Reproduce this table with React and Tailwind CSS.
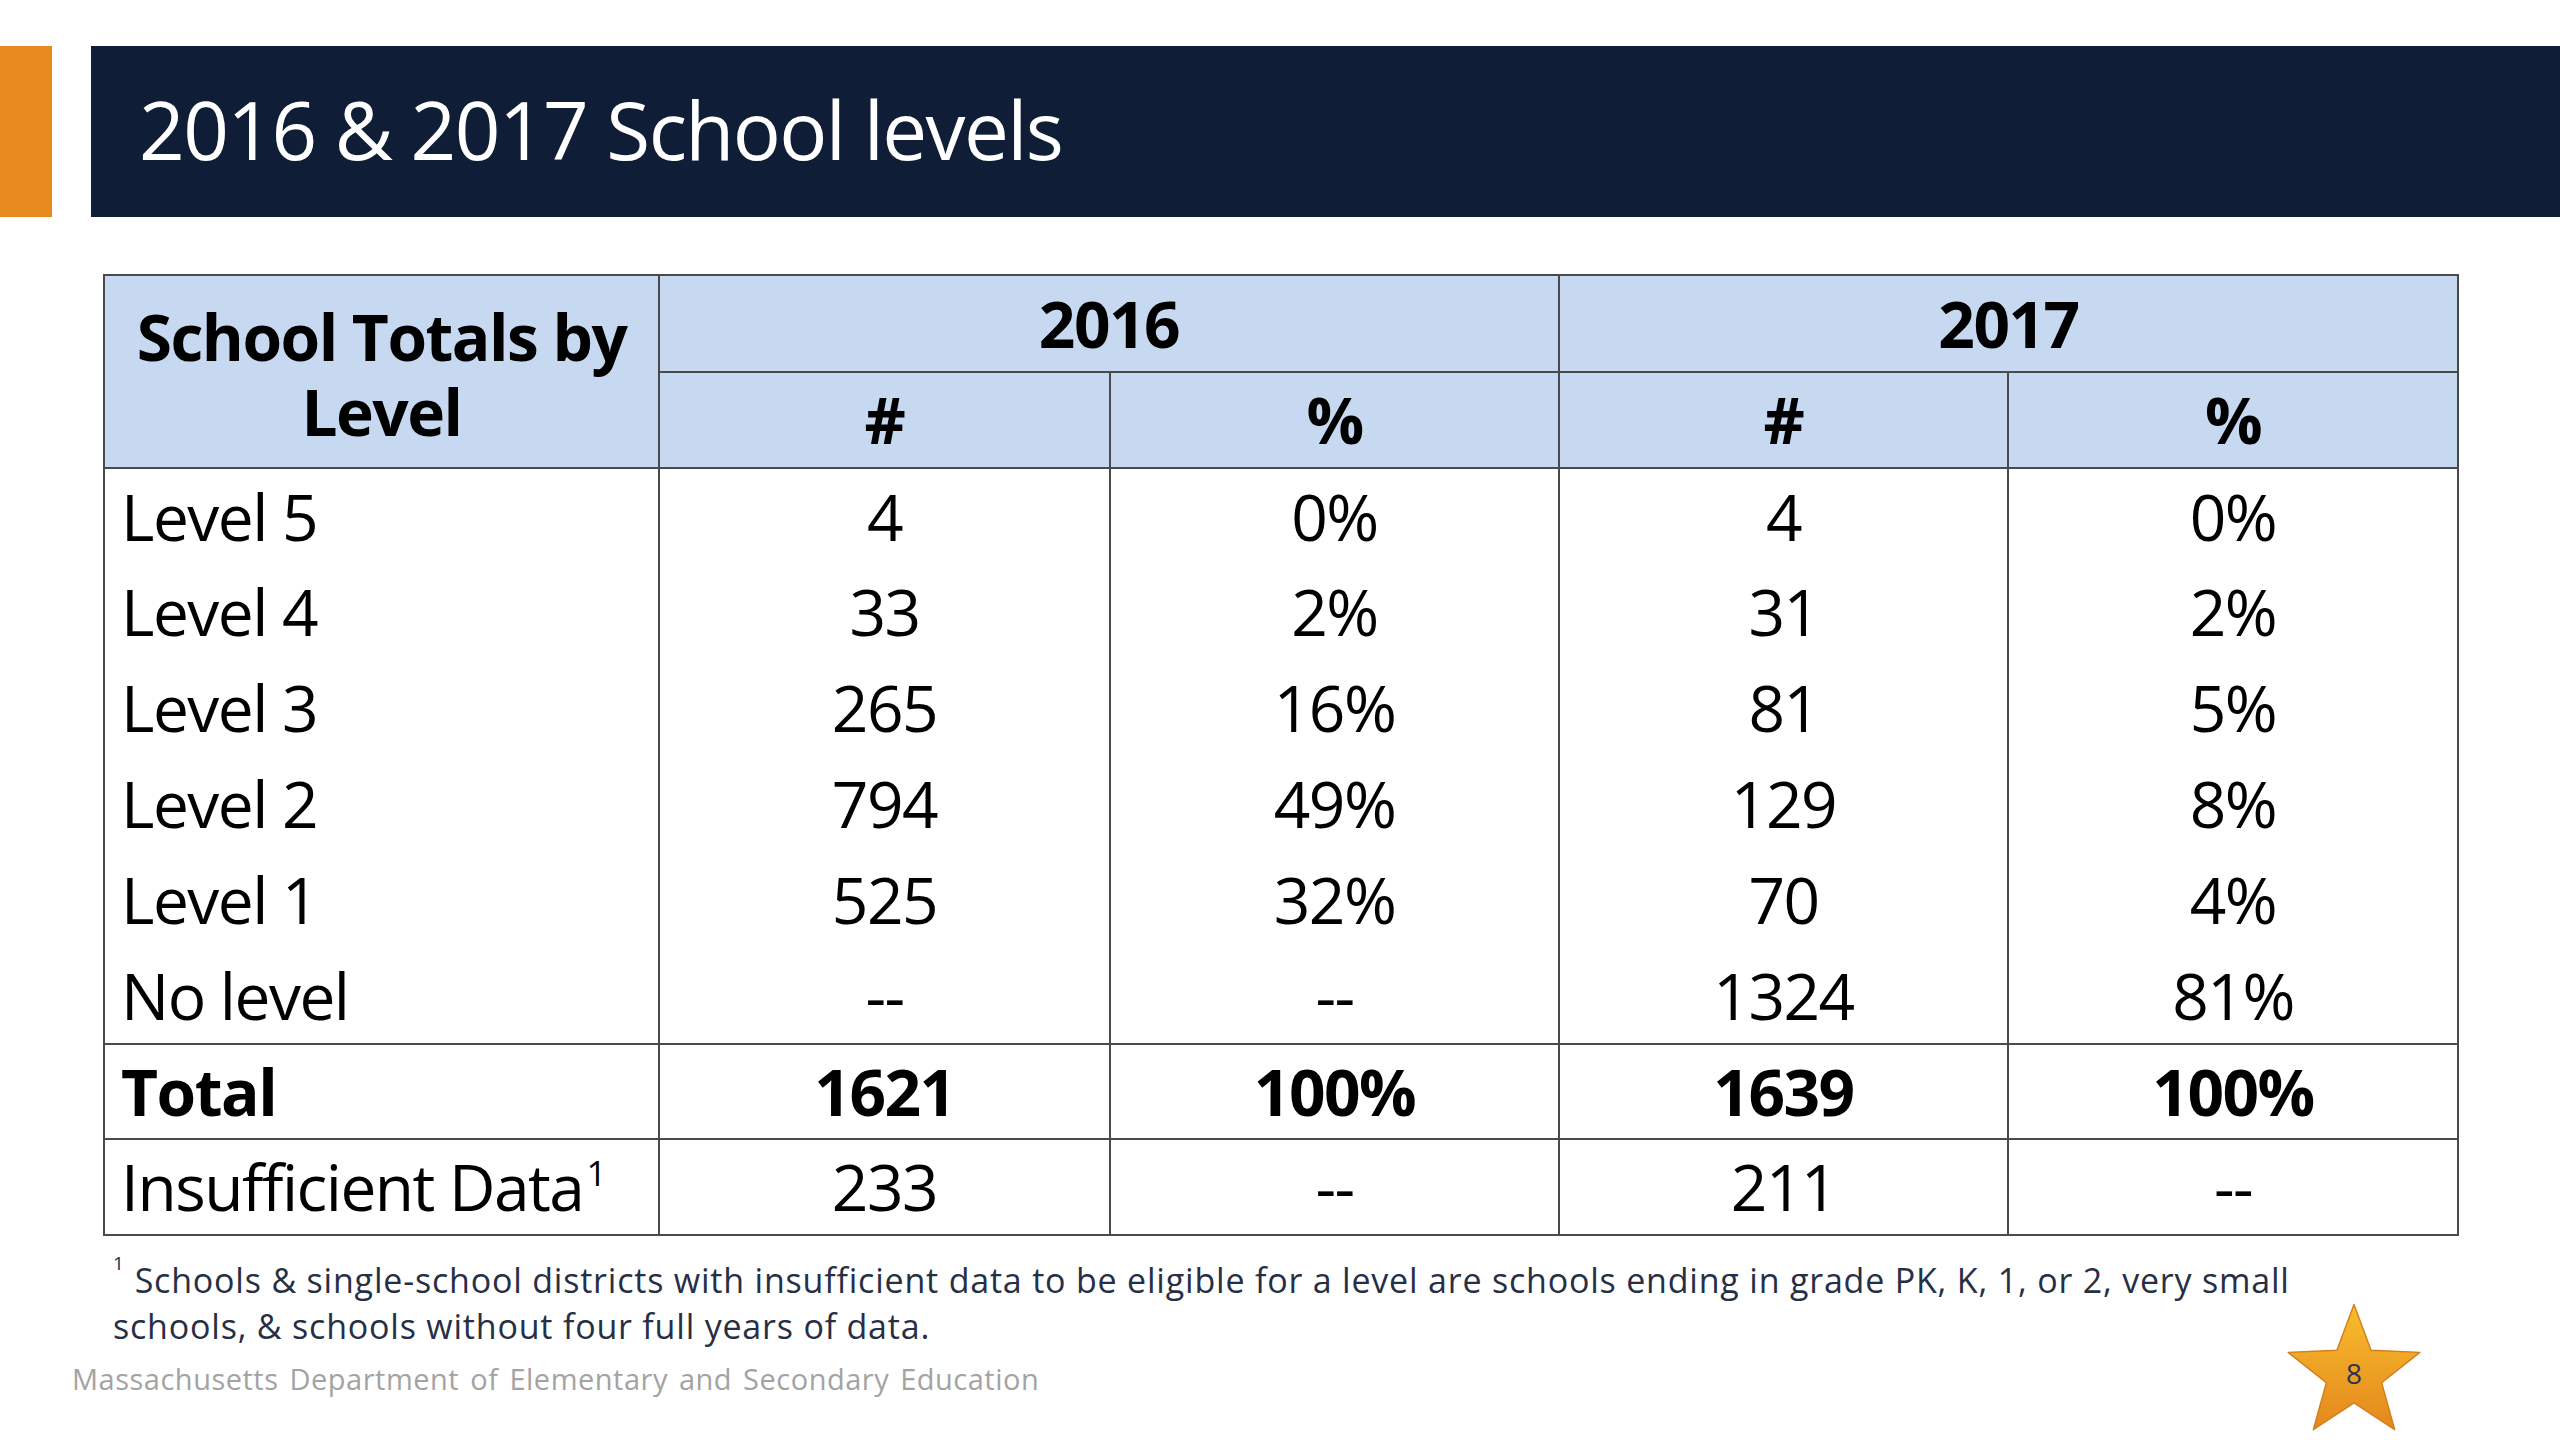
const rows = [
  { label: "Level 5", a: "4", b: "0%", c: "4", d: "0%" },
  { label: "Level 4", a: "33", b: "2%", c: "31", d: "2%" },
  { label: "Level 3", a: "265", b: "16%", c: "81", d: "5%" },
  { label: "Level 2", a: "794", b: "49%", c: "129", d: "8%" },
  { label: "Level 1", a: "525", b: "32%", c: "70", d: "4%" },
  { label: "No level", a: "--", b: "--", c: "1324", d: "81%" },
];

function Star() {
  return (
    <div className="absolute right-[134px] bottom-[3px] w-[144px] h-[139px] flex items-center justify-center">
      <svg viewBox="-2 -2 104 95" className="absolute inset-0 w-full h-full">
        <defs>
          <linearGradient id="starFill" x1="0" y1="0" x2="0" y2="1">
            <stop offset="0" stopColor="#f8bd2c" />
            <stop offset="1" stopColor="#e4871d" />
          </linearGradient>
        </defs>
        <polygon
          points="50,0 62.34,33.01 97.55,34.55 69.97,56.49 79.39,90.45 50,71 20.61,90.45 30.03,56.49 2.45,34.55 37.66,33.01"
          fill="url(#starFill)"
          stroke="#d27d1a"
          strokeWidth="1"
          strokeLinejoin="round"
        />
      </svg>
      <span className="relative mt-[10px] text-[28px] text-[#2b3550]">8</span>
    </div>
  );
}

export default function App() {
  const cell = "border-x-2 border-[#4a4a4a] text-center leading-none";
  const label = "border-x-2 border-[#4a4a4a] pl-[16px] leading-none";
  return (
    <div
      className="relative w-[2560px] h-[1440px] bg-white overflow-hidden"
      style={{ fontFamily: '"Open Sans", "Noto Sans", sans-serif' }}
    >
      {/* title bar */}
      <div className="flex pt-[46px] gap-[39px]">
        <div className="w-[52px] h-[171px] bg-[#e8891f]" />
        <div className="flex-1 h-[171px] bg-[#101d36] flex items-center pl-[48px]">
          <h1 className="text-[80px] text-white leading-none tracking-[-1.6px] pb-[6px]">2016 &amp; 2017 School levels</h1>
        </div>
      </div>

      {/* table */}
      <table className="ml-[103px] mt-[57px] w-[2354px] border-collapse border-2 border-[#4a4a4a] text-[64px] tracking-[-1.5px] text-black table-fixed">
        <colgroup>
          <col className="w-[555px]" />
          <col className="w-[451px]" />
          <col className="w-[449px]" />
          <col className="w-[449px]" />
          <col className="w-[450px]" />
        </colgroup>
        <thead className="bg-[#c6d9f1] font-bold">
          <tr className="h-[97px]">
            <th rowSpan={2} className="border-x-2 border-b-2 border-[#4a4a4a] text-center pt-[4px]">
              <span className="block leading-[75px]">School Totals by</span>
              <span className="block leading-[75px]">Level</span>
            </th>
            <th colSpan={2} className={`${cell} border-b-2`}>2016</th>
            <th colSpan={2} className={`${cell} border-b-2`}>2017</th>
          </tr>
          <tr className="h-[96px]">
            <th className={`${cell} border-b-2`}>#</th>
            <th className={`${cell} border-b-2`}>%</th>
            <th className={`${cell} border-b-2`}>#</th>
            <th className={`${cell} border-b-2`}>%</th>
          </tr>
        </thead>
        <tbody>
          {rows.map((r, i) => (
            <tr key={r.label} className={`h-[96px] ${i === rows.length - 1 ? "border-b-2 border-[#4a4a4a]" : ""}`}>
              <td className={label}>{r.label}</td>
              <td className={cell}>{r.a}</td>
              <td className={cell}>{r.b}</td>
              <td className={cell}>{r.c}</td>
              <td className={cell}>{r.d}</td>
            </tr>
          ))}
          <tr className="h-[95px] border-b-2 border-[#4a4a4a] font-bold">
            <td className={label}>Total</td>
            <td className={cell}>1621</td>
            <td className={cell}>100%</td>
            <td className={cell}>1639</td>
            <td className={cell}>100%</td>
          </tr>
          <tr className="h-[96px]">
            <td className={label}>
              Insufficient Data<sup className="text-[35px] align-[8px] ml-[3px]">1</sup>
            </td>
            <td className={cell}>233</td>
            <td className={cell}>--</td>
            <td className={cell}>211</td>
            <td className={cell}>--</td>
          </tr>
        </tbody>
      </table>

      {/* footnote */}
      <p className="ml-[113px] mt-[21px] text-[34px] leading-[46px] tracking-[0.8px] text-[#262f45]">
        <sup className="text-[19px] align-[14px] mr-[10px]">1</sup>Schools &amp; single-school districts with insufficient data to be eligible for a level are schools ending in grade PK, K, 1, or 2, very small
        <br />
        schools, &amp; schools without four full years of data.
      </p>

      {/* footer */}
      <div className="ml-[72px] mt-[10px] text-[29px] leading-[40px] text-[#a3a3a3] tracking-[0.5px] [word-spacing:3px]">
        Massachusetts Department of Elementary and Secondary Education
      </div>
      <Star />
    </div>
  );
}
